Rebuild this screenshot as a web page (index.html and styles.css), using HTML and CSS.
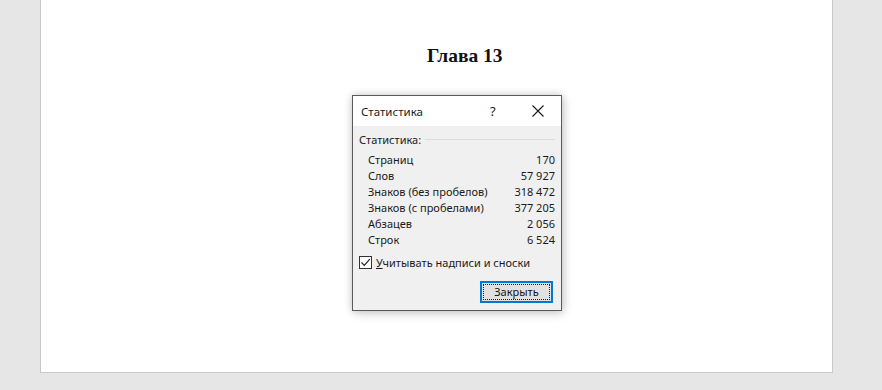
FILE: index.html
```html
<!DOCTYPE html>
<html lang="ru">
<head>
<meta charset="utf-8">
<link rel="stylesheet" href="styles.css">
</head>
<body>
<div class="page">
  <h1 class="heading">Глава 13</h1>
</div>
<div class="dialog">
  <div class="titlebar">
    <span class="title">Статистика</span>
    <span class="help">?</span>
    <span class="close">
      <svg width="12" height="12" viewBox="0 0 12 12"><path d="M0.5 0.5L11.5 11.5M11.5 0.5L0.5 11.5" stroke="#1a1a1a" stroke-width="1.1" fill="none"/></svg>
    </span>
  </div>
  <div class="body">
    <div class="group"><span>Статистика:</span><span class="rule"></span></div>
    <div class="rows">
      <div class="row"><span>Страниц</span><span>170</span></div>
      <div class="row"><span>Слов</span><span>57 927</span></div>
      <div class="row"><span>Знаков (без пробелов)</span><span>318 472</span></div>
      <div class="row"><span>Знаков (с пробелами)</span><span>377 205</span></div>
      <div class="row"><span>Абзацев</span><span>2 056</span></div>
      <div class="row"><span>Строк</span><span>6 524</span></div>
    </div>
    <div class="check">
      <span class="box"><svg width="11" height="11" viewBox="0 0 11 11"><path d="M1.5 5.5L4.3 8.3L9.8 2.2" stroke="#222" stroke-width="1.2" fill="none"/></svg></span>
      <span><u>У</u>читывать надписи и сноски</span>
    </div>
    <div class="actions">
      <button class="btn"><span class="focus">Закрыть</span></button>
    </div>
  </div>
</div>
</body>
</html>
```
FILE: styles.css
```css
html, body {
  margin: 0;
  padding: 0;
}
body {
  background: #e6e6e6;
  width: 882px;
  height: 390px;
  overflow: hidden;
  position: relative;
  font-family: "Noto Sans", "Open Sans", sans-serif;
}
.page {
  margin-left: 40px;
  width: 793px;
  height: 373px;
  background: #fff;
  border-left: 1px solid #c9c9c9;
  border-right: 1px solid #c9c9c9;
  border-bottom: 1px solid #c9c9c9;
  box-sizing: border-box;
  padding-top: 44px;
  padding-left: 386px;
}
.heading {
  margin: 0;
  font-family: "Liberation Serif", serif;
  font-weight: bold;
  font-size: 19.5px;
  line-height: 24px;
  color: #111;
}
.dialog {
  position: absolute;
  left: 352px;
  top: 95px;
  width: 210px;
  height: 216px;
  box-sizing: border-box;
  border: 1px solid #5a5a5a;
  background: #f0f0f0;
  box-shadow: 0 0 8px rgba(0,0,0,0.18), 2px 3px 10px rgba(0,0,0,0.12);
  display: flex;
  flex-direction: column;
  font-size: 11px;
  color: #1a1a1a;
}
.titlebar {
  height: 30px;
  background: #fff;
  display: flex;
  align-items: center;
  padding-left: 8px;
  flex-shrink: 0;
}
.title {
  font-size: 11.5px;
  flex: 1;
}
.help {
  font-size: 13px;
  width: 12px;
  margin-right: 30px;
}
.close {
  width: 12px;
  height: 12px;
  margin-right: 17px;
  display: flex;
}
.body {
  padding: 5px 6px 0 6px;
  display: flex;
  flex-direction: column;
}
.group {
  display: flex;
  align-items: center;
  height: 16px;
}
.rule {
  flex: 1;
  height: 0;
  border-top: 1px solid #dcdcdc;
  margin-left: 4px;
  margin-top: 1px;
}
.rows {
  padding: 5px 0 0 9px;
}
.row {
  display: flex;
  justify-content: space-between;
  height: 16px;
  line-height: 16px;
}
.check {
  display: flex;
  align-items: center;
  margin-top: 6px;
  height: 16px;
}
.box {
  width: 11px;
  height: 11px;
  border: 1px solid #333;
  background: #fff;
  display: flex;
  margin-right: 4px;
}
.actions {
  display: flex;
  justify-content: flex-end;
  margin-top: 11px;
  padding-right: 2px;
}
.btn {
  width: 73px;
  height: 22px;
  box-sizing: border-box;
  border: 2px solid #0078d7;
  background: #e1e1e1;
  padding: 1px;
  font: inherit;
  font-size: 11px;
  color: #111;
  display: flex;
}
.focus {
  flex: 1;
  border: 1px dotted #222;
  display: flex;
  align-items: center;
  justify-content: center;
  line-height: 14px;
}
```
